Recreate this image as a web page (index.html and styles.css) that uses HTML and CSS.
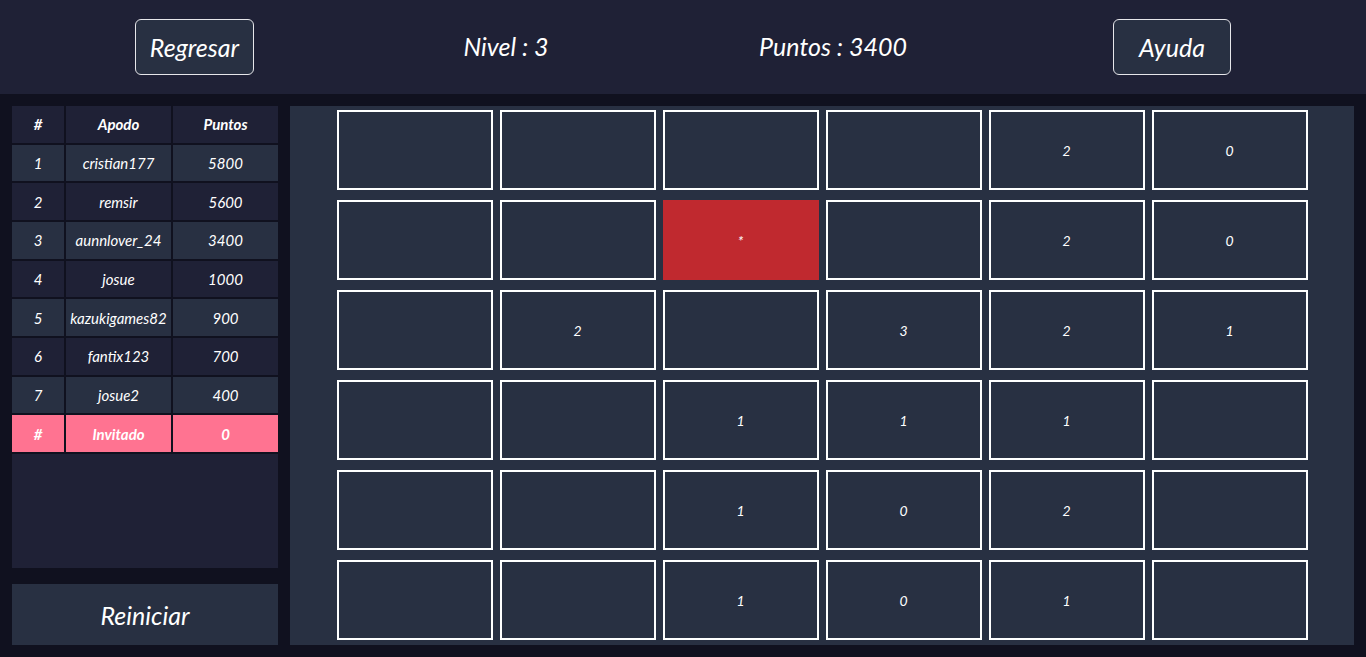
FILE: index.html
```html
<!DOCTYPE html>
<html lang="es">
<head>
<meta charset="utf-8">
<title>Buscaminas</title>
<link rel="stylesheet" href="styles.css">
</head>
<body>
<header class="topbar">
  <button class="top-btn btn-back">Regresar</button>
  <span class="top-label lbl-level">Nivel : 3</span>
  <span class="top-label lbl-points">Puntos : 3400</span>
  <button class="top-btn btn-help">Ayuda</button>
</header>
<main class="layout">
  <aside class="side">
    <div class="ranking">
      <table class="rank-table">
        <thead>
          <tr><th class="c-num">#</th><th>Apodo</th><th>Puntos</th></tr>
        </thead>
        <tbody>
          <tr class="light"><td>1</td><td>cristian177</td><td>5800</td></tr>
          <tr><td>2</td><td>remsir</td><td>5600</td></tr>
          <tr class="light"><td>3</td><td>aunnlover_24</td><td>3400</td></tr>
          <tr><td>4</td><td>josue</td><td>1000</td></tr>
          <tr class="light"><td>5</td><td>kazukigames82</td><td>900</td></tr>
          <tr><td>6</td><td>fantix123</td><td>700</td></tr>
          <tr class="light"><td>7</td><td>josue2</td><td>400</td></tr>
          <tr class="guest"><td>#</td><td>Invitado</td><td>0</td></tr>
        </tbody>
      </table>
    </div>
    <button class="restart">Reiniciar</button>
  </aside>
  <section class="board-panel">
    <div class="board">
      <div class="cell"></div><div class="cell"></div><div class="cell"></div><div class="cell"></div><div class="cell">2</div><div class="cell">0</div>
      <div class="cell"></div><div class="cell"></div><div class="cell mine">*</div><div class="cell"></div><div class="cell">2</div><div class="cell">0</div>
      <div class="cell"></div><div class="cell">2</div><div class="cell"></div><div class="cell">3</div><div class="cell">2</div><div class="cell">1</div>
      <div class="cell"></div><div class="cell"></div><div class="cell">1</div><div class="cell">1</div><div class="cell">1</div><div class="cell"></div>
      <div class="cell"></div><div class="cell"></div><div class="cell">1</div><div class="cell">0</div><div class="cell">2</div><div class="cell"></div>
      <div class="cell"></div><div class="cell"></div><div class="cell">1</div><div class="cell">0</div><div class="cell">1</div><div class="cell"></div>
    </div>
  </section>
</main>
</body>
</html>
```
FILE: styles.css
```css
* { box-sizing: border-box; }
html, body { margin: 0; padding: 0; }
body {
  background: #10111f;
  color: #ffffff;
  font-family: "Lato", "Open Sans", sans-serif;
  font-style: italic;
  width: 1366px;
  height: 657px;
  overflow: hidden;
}
.topbar {
  height: 94px;
  background: #1f2136;
  display: flex;
  align-items: center;
  padding: 0 0 0 135px;
}
.top-btn {
  height: 56px;
  padding: 0;
  background: #283042;
  color: #fff;
  border: 1px solid #e6e6ea;
  border-radius: 6px;
  font: italic 25px "Lato", sans-serif;
  text-align: center;
}
.btn-back { width: 119px; }
.btn-help { width: 118px; margin-left: 180px; }
.top-label {
  font-size: 25px;
  text-align: center;
  margin-top: -2px;
}
.lbl-level { width: 150px; margin-left: 177px; }
.lbl-points { width: 200px; margin-left: 152px; }
.layout {
  height: 563px;
  padding: 12px;
  display: grid;
  grid-template-columns: 266px 1fr;
  gap: 12px;
}
.side {
  display: flex;
  flex-direction: column;
  gap: 16px;
}
.ranking {
  flex: 1;
  background: #1f2136;
}
.rank-table {
  border-collapse: collapse;
  width: calc(100% + 4px);
  margin: -2px -2px 0 -2px;
  table-layout: fixed;
  font-size: 15px;
}
.rank-table th, .rank-table td {
  border: 2px solid #10111f;
  height: 38.67px;
  padding: 0;
  text-align: center;
  font-style: italic;
}
.rank-table th {
  font-weight: 700;
  background: #1f2136;
}
.rank-table .c-num { width: 54px; }
.rank-table tr { background: #1f2136; }
.rank-table tr.light { background: #283042; }
.rank-table tr.guest { background: #ff7391; font-weight: 700; }
.restart {
  height: 61px;
  background: #283042;
  color: #fff;
  border: none;
  font: italic 25px "Lato", sans-serif;
}
.board-panel {
  background: #283042;
  display: flex;
  align-items: center;
  justify-content: center;
}
.board {
  display: grid;
  grid-template-columns: repeat(6, 156px);
  grid-auto-rows: 80px;
  column-gap: 7px;
  row-gap: 10px;
  margin-top: -1px;
}
.cell {
  border: 2px solid #ffffff;
  background: #283042;
  display: flex;
  align-items: center;
  justify-content: center;
  font-size: 14px;
}
.cell.mine {
  background: #c0292f;
  border-color: #c0292f;
}
```
